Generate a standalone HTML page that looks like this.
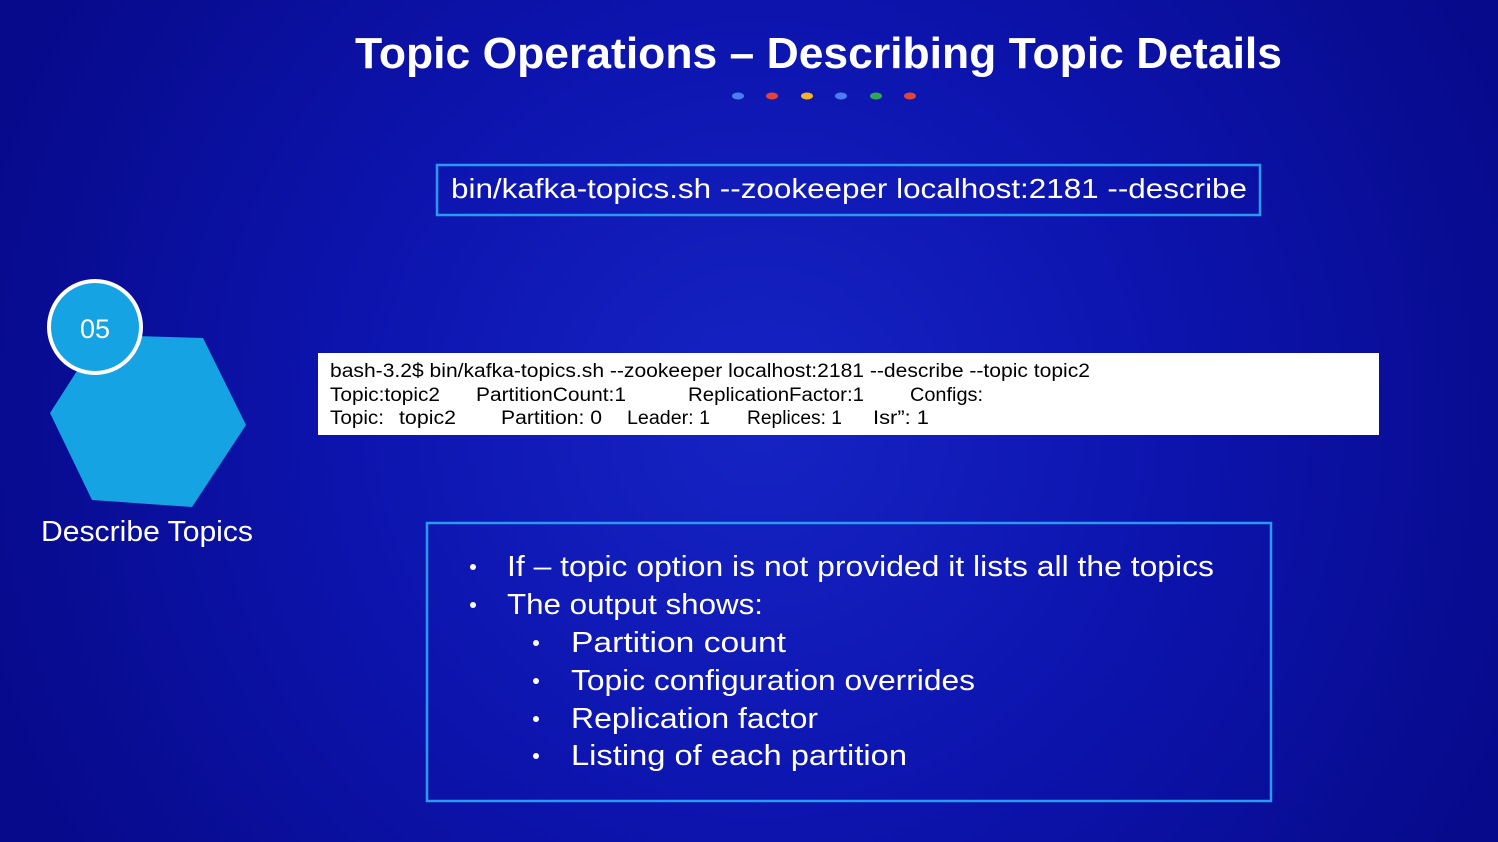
<!DOCTYPE html>
<html><head><meta charset="utf-8"><style>
html,body{margin:0;padding:0;width:1498px;height:842px;overflow:hidden;background:#0a0e9c}
svg{display:block}
text{font-family:"Liberation Sans",sans-serif}
</style></head><body>
<svg width="1498" height="842" viewBox="0 0 1498 842" xmlns="http://www.w3.org/2000/svg">
<defs>
<radialGradient id="bg" cx="760" cy="420" r="820" gradientUnits="userSpaceOnUse">
<stop offset="0" stop-color="#1624c4"/>
<stop offset="0.5" stop-color="#0d14ae"/>
<stop offset="1" stop-color="#070a8a"/>
</radialGradient>
</defs>
<rect width="1498" height="842" fill="url(#bg)"/>
<text x="355" y="68" font-size="44" font-weight="bold" fill="#fff" textLength="927" lengthAdjust="spacingAndGlyphs">Topic Operations – Describing Topic Details</text>
<g>
<ellipse cx="738" cy="96" rx="6" ry="3.5" fill="#4a7ef0"/>
<ellipse cx="772" cy="96" rx="6" ry="3.5" fill="#e0443a"/>
<ellipse cx="807" cy="96" rx="6" ry="3.5" fill="#f2b32a"/>
<ellipse cx="841" cy="96" rx="6" ry="3.5" fill="#4a7ef0"/>
<ellipse cx="876" cy="96" rx="6" ry="3.5" fill="#2fa84f"/>
<ellipse cx="910" cy="96" rx="6" ry="3.5" fill="#e0443a"/>
</g>
<rect x="437" y="165" width="823" height="50" fill="none" stroke="#2a9af0" stroke-width="2.5"/>
<text x="451" y="198" font-size="28" fill="#fff" textLength="796" lengthAdjust="spacingAndGlyphs">bin/kafka-topics.sh --zookeeper localhost:2181  --describe</text>

<polygon points="100,335 203,338 246,425 192,507 92,500 50,413" fill="#16a3e3"/>
<circle cx="95" cy="327" r="46" fill="#16a3e3" stroke="#fff" stroke-width="4"/>
<text x="95" y="338" font-size="27" fill="#fff" text-anchor="middle">05</text>
<text x="41" y="541" font-size="29" fill="#fff" textLength="212" lengthAdjust="spacingAndGlyphs">Describe Topics</text>

<rect x="318" y="353" width="1061" height="82" fill="#fff"/>
<g font-size="19" fill="#000">
<text x="330" y="377" textLength="760" lengthAdjust="spacingAndGlyphs">bash-3.2$  bin/kafka-topics.sh  --zookeeper localhost:2181  --describe  --topic topic2</text>
<text x="330" y="401" textLength="110" lengthAdjust="spacingAndGlyphs">Topic:topic2</text>
<text x="476" y="401" textLength="150" lengthAdjust="spacingAndGlyphs">PartitionCount:1</text>
<text x="688" y="401" textLength="176" lengthAdjust="spacingAndGlyphs">ReplicationFactor:1</text>
<text x="910" y="401" textLength="73" lengthAdjust="spacingAndGlyphs">Configs:</text>
<text x="330" y="424" textLength="54" lengthAdjust="spacingAndGlyphs">Topic:</text>
<text x="399" y="424" textLength="57" lengthAdjust="spacingAndGlyphs">topic2</text>
<text x="501" y="424" textLength="101" lengthAdjust="spacingAndGlyphs">Partition: 0</text>
<text x="627" y="424" textLength="83" lengthAdjust="spacingAndGlyphs">Leader: 1</text>
<text x="747" y="424" textLength="95" lengthAdjust="spacingAndGlyphs">Replices: 1</text>
<text x="873" y="424" textLength="56" lengthAdjust="spacingAndGlyphs">Isr”: 1</text>
</g>

<rect x="427" y="523" width="844" height="278" fill="none" stroke="#2a9af0" stroke-width="2.5"/>
<g font-size="29" fill="#fff">
<circle cx="473" cy="567" r="3"/>
<text x="507" y="576" textLength="707" lengthAdjust="spacingAndGlyphs">If – topic option is not provided it lists all the topics</text>
<circle cx="473" cy="605" r="3"/>
<text x="507" y="614" textLength="256" lengthAdjust="spacingAndGlyphs">The output shows:</text>
<circle cx="536" cy="643" r="3"/>
<text x="571" y="652" textLength="215" lengthAdjust="spacingAndGlyphs">Partition  count</text>
<circle cx="536" cy="681" r="3"/>
<text x="571" y="690" textLength="404" lengthAdjust="spacingAndGlyphs">Topic configuration overrides</text>
<circle cx="536" cy="719" r="3"/>
<text x="571" y="728" textLength="247" lengthAdjust="spacingAndGlyphs">Replication factor</text>
<circle cx="536" cy="756" r="3"/>
<text x="571" y="765" textLength="336" lengthAdjust="spacingAndGlyphs">Listing of each  partition</text>
</g>
</svg>
</body></html>
